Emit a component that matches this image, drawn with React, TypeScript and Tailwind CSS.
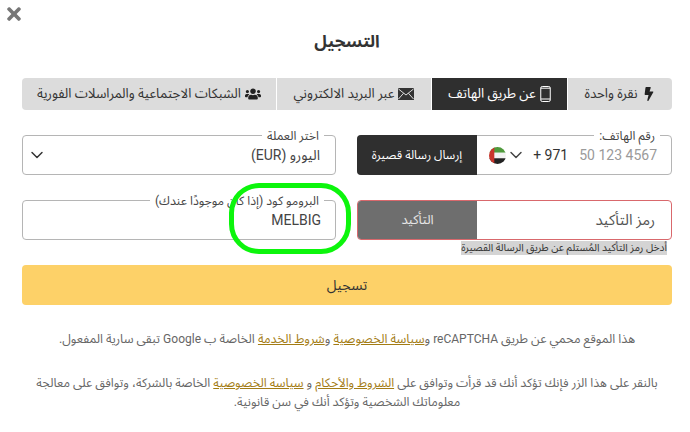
import { ChevronDown } from "lucide-react";
import { FaBolt, FaTimes, FaUsers } from "react-icons/fa";

const UaeFlag = () => (
  <svg width="17" height="17" viewBox="0 0 16 16">
    <defs>
      <clipPath id="flagClip">
        <circle cx="8" cy="8" r="8" />
      </clipPath>
    </defs>
    <g clipPath="url(#flagClip)">
      <rect width="16" height="5.4" fill="#4f9a3c" />
      <rect y="5.4" width="16" height="5.2" fill="#f2f2f2" />
      <rect y="10.6" width="16" height="5.4" fill="#222" />
      <rect width="5" height="16" fill="#c9352b" />
    </g>
  </svg>
);

const PhoneIcon = () => (
  <svg width="11" height="16" viewBox="0 0 11 16" fill="none" stroke="currentColor">
    <rect x="0.75" y="0.5" width="9.5" height="15" rx="1.5" strokeWidth="1" />
    <line x1="1" y1="13" x2="10" y2="13" strokeWidth="1" />
    <line x1="1" y1="2.2" x2="10" y2="2.2" strokeWidth="1" />
  </svg>
);

const MailIcon = () => (
  <svg width="16" height="12" viewBox="0 0 16 12">
    <rect width="16" height="12" fill="currentColor" rx="0.5" />
    <path d="M0.5 1 8 7l7.5-6M0.5 11 5.6 5.2M15.5 11l-5.1-5.8" fill="none" stroke="#dcdcdc" strokeWidth="1" />
  </svg>
);

const FloatingLabel = ({ children }: { children: React.ReactNode }) => (
  <span className="absolute -top-[9px] right-[11px] bg-white px-[5px] text-[12.3px] leading-[18px] text-[#444]">
    {children}
  </span>
);

export default function App() {
  return (
    <div
      dir="rtl"
      className="relative h-[432px] w-[690px] overflow-hidden bg-white pr-[18px] pl-[22px] font-['Roboto','Noto_Sans_Arabic',sans-serif] text-[#333]"
    >
      <button className="absolute top-[4px] left-[4px] text-[#777]">
        <FaTimes size={20} />
      </button>

      <h2 className="pt-[28px] text-center text-[17px] leading-[26px] font-bold text-[#333]">التسجيل</h2>

      <div className="mt-[24px] flex h-[32px] gap-px text-[13.3px]">
        <div className="flex w-[104px] items-center justify-center gap-1 rounded-r bg-[#dcdcdc]">
          <FaBolt size={14} className="text-[#222]" />
          <span>نقرة واحدة</span>
        </div>
        <div className="flex w-[135px] items-center justify-center gap-1 bg-[#2f2f2f] text-white">
          <PhoneIcon />
          <span>عن طريق الهاتف</span>
        </div>
        <div className="flex w-[154px] items-center justify-center gap-1 bg-[#dcdcdc]">
          <MailIcon />
          <span>عبر البريد الالكتروني</span>
        </div>
        <div className="flex flex-1 items-center justify-center gap-1 rounded-l bg-[#dcdcdc]">
          <FaUsers size={16} className="text-[#222]" />
          <span>الشبكات الاجتماعية والمراسلات الفورية</span>
        </div>
      </div>

      <div className="mt-[25px] grid grid-cols-[315px_314px] gap-x-[21px]">
        <div className="relative flex h-[40px] rounded border border-[#b5b5b5]">
          <FloatingLabel>رقم الهاتف:</FloatingLabel>
          <div dir="ltr" className="flex flex-1 items-center justify-end pr-[14px] text-[14px]">
            <UaeFlag />
            <ChevronDown size={20} strokeWidth={1.75} className="text-[#444]" />
            <span className="ml-[7px] text-[#333]">+ 971</span>
            <span className="ml-[11px] text-[#9a9a9a]">50 123 4567</span>
          </div>
          <button className="-m-px w-[120px] rounded-l bg-[#2f2f2f] text-[12px] text-white">إرسال رسالة قصيرة</button>
        </div>

        <div className="relative flex h-[40px] items-center justify-between rounded border border-[#b5b5b5] pr-[11px] pl-[4px]">
          <FloatingLabel>اختر العملة</FloatingLabel>
          <span className="pt-[1px] pr-[4px] text-[14px] text-[#444]">اليورو (EUR)</span>
          <ChevronDown size={20} strokeWidth={1.75} className="text-[#333]" />
        </div>
      </div>

      <div className="mt-[25px] grid grid-cols-[315px_314px] gap-x-[21px]">
        <div>
          <div className="flex h-[40px] overflow-hidden rounded border border-[#d9686c]">
            <div className="flex flex-1 items-center pr-[16px] text-[15px] text-[#555]">رمز التأكيد</div>
            <div className="flex w-[119px] items-center justify-center bg-[#6e6e6e] text-[13px] text-[#e6e6e6]">
              التأكيد
            </div>
          </div>
          <div className="mt-[1px] mr-[5px] w-fit bg-[#d4d4d4] text-[10.4px] leading-[14px] text-[#333]">
            أدخل رمز التأكيد المُستلم عن طريق الرسالة القصيرة
          </div>
        </div>

        <div className="relative flex h-[40px] items-center rounded border border-[#b5b5b5] px-[14px] text-[14px] text-[#444]">
          <FloatingLabel>البرومو كود (إذا كان موجودًا عندك)</FloatingLabel>
          <span className="pt-[1px]">MELBIG</span>
        </div>
      </div>

      <button className="mt-[10px] h-[40px] w-full rounded bg-[#fdd168] text-[14px] text-[#333]">تسجيل</button>

      <p className="mt-[24px] text-center text-[12.5px] leading-[19px] text-[#666]">
        هذا الموقع محمي عن طريق <span className="text-[12px]">reCAPTCHA</span> و
        <a className="text-[#a37c14] underline">سياسة الخصوصية</a> و
        <a className="text-[#a37c14] underline">شروط الخدمة</a> الخاصة ب <span className="text-[12px]">Google</span> تبقى سارية المفعول.
      </p>

      <p className="mt-[24px] text-center text-[12.4px] leading-[19px] text-[#666]">
        بالنقر على هذا الزر فإنك تؤكد أنك قد قرأت وتوافق على <a className="text-[#a37c14] underline">الشروط والأحكام</a> و{" "}
        <a className="text-[#a37c14] underline">سياسة الخصوصية</a> الخاصة بالشركة، وتوافق على معالجة
        <br />
        معلوماتك الشخصية وتؤكد أنك في سن قانونية.
      </p>

      <div className="pointer-events-none absolute top-[183px] left-[229px] h-[71px] w-[122px] rounded-[30px] border-[5px] border-[#0cf50c]" />
    </div>
  );
}
